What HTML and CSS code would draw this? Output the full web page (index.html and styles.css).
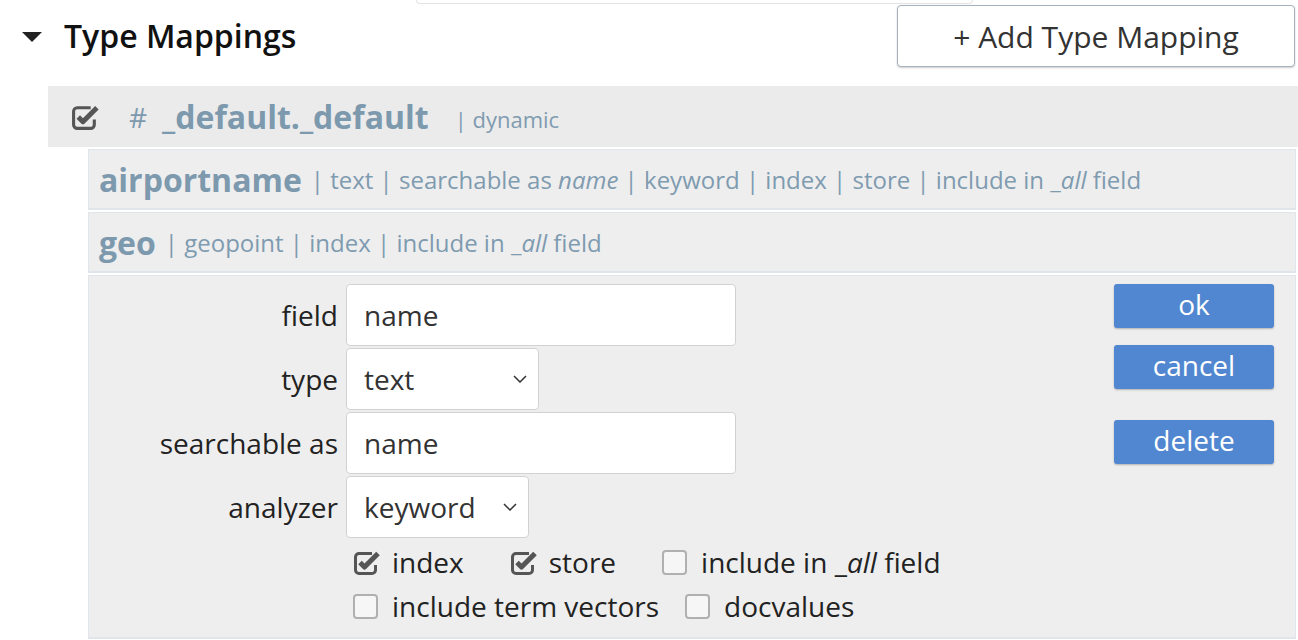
FILE: index.html
```
<!DOCTYPE html>
<html>
<head>
<meta charset="utf-8">
<link rel="stylesheet" href="styles.css">
</head>
<body>
<div class="page">
  <div class="prev-input"></div>
  <div class="section-head">
    <div class="title"><span class="caret"></span><span>Type Mappings</span></div>
    <button class="add-btn">+ Add Type Mapping</button>
  </div>
  <div class="mapping">
    <div class="mapping-head">
      <svg class="chk-icon big" viewBox="0 0 28 26" width="29" height="27"><path d="M19 4.5H6A3.5 3.5 0 0 0 2.5 8v13A3.5 3.5 0 0 0 6 24.5h13a3.5 3.5 0 0 0 3.5-3.5v-5" fill="none" stroke="#555" stroke-width="3"/><path d="M7 13.5l4.5 4.5L25 4.5" fill="none" stroke="#555" stroke-width="4.8" stroke-linejoin="round"/></svg>
      <span class="hash">#</span>
      <span class="type-name">_default._default</span>
      <span class="meta dyn">| dynamic</span>
    </div>
    <div class="fields">
      <div class="field-row">
        <span class="field-name">airportname</span>
        <span class="meta">| text | searchable as <i>name</i> | keyword | index | store | include in _<i>all</i> field</span>
      </div>
      <div class="field-row">
        <span class="field-name">geo</span>
        <span class="meta">| geopoint | index | include in _<i>all</i> field</span>
      </div>
      <div class="edit">
        <div class="form">
          <label class="lbl">field</label>
          <div class="input wide">name</div>
          <label class="lbl">type</label>
          <div class="input select type-sel"><span>text</span><svg width="14" height="8" viewBox="0 0 14 8"><path d="M1 1l6 6 6-6" fill="none" stroke="#333" stroke-width="1.5"/></svg></div>
          <label class="lbl">searchable as</label>
          <div class="input wide">name</div>
          <label class="lbl">analyzer</label>
          <div class="input select an-sel"><span>keyword</span><svg width="14" height="8" viewBox="0 0 14 8"><path d="M1 1l6 6 6-6" fill="none" stroke="#333" stroke-width="1.5"/></svg></div>
          <div class="checks">
            <div class="check-row">
              <span class="chk gap1"><svg class="chk-icon" viewBox="0 0 28 26" width="28" height="26"><path d="M19 4.5H6A3.5 3.5 0 0 0 2.5 8v13A3.5 3.5 0 0 0 6 24.5h13a3.5 3.5 0 0 0 3.5-3.5v-5" fill="none" stroke="#555" stroke-width="3"/><path d="M7 13.5l4.5 4.5L25 4.5" fill="none" stroke="#555" stroke-width="5" stroke-linejoin="round"/></svg><span>index</span></span>
              <span class="chk gap1b"><svg class="chk-icon" viewBox="0 0 28 26" width="28" height="26"><path d="M19 4.5H6A3.5 3.5 0 0 0 2.5 8v13A3.5 3.5 0 0 0 6 24.5h13a3.5 3.5 0 0 0 3.5-3.5v-5" fill="none" stroke="#555" stroke-width="3"/><path d="M7 13.5l4.5 4.5L25 4.5" fill="none" stroke="#555" stroke-width="5" stroke-linejoin="round"/></svg><span>store</span></span>
              <span class="chk"><span class="box"></span><span>include in _<i>all</i> field</span></span>
            </div>
            <div class="check-row">
              <span class="chk gap2"><span class="box"></span><span>include term vectors</span></span>
              <span class="chk"><span class="box"></span><span>docvalues</span></span>
            </div>
          </div>
        </div>
        <div class="actions">
          <button class="btn">ok</button>
          <button class="btn">cancel</button>
          <button class="btn del">delete</button>
        </div>
      </div>
    </div>
  </div>
</div>
</body>
</html>
```
FILE: styles.css
```
* { box-sizing: border-box; }
body {
  margin: 0;
  font-family: "Open Sans", sans-serif;
  background: #fff;
  color: #333;
}
.page { width: 1298px; }
.prev-input {
  margin-left: 416px;
  width: 557px;
  height: 4px;
  border: 1px solid #e3e3e3;
  border-top: none;
  border-radius: 0 0 5px 5px;
}
.section-head {
  display: flex;
  justify-content: space-between;
  align-items: flex-start;
  padding-left: 22px;
  padding-right: 3px;
}
.title {
  display: flex;
  align-items: center;
  height: 63px;
  font-size: 32px;
  font-weight: 600;
  color: #111;
}
.caret {
  width: 0;
  height: 0;
  border-left: 10.5px solid transparent;
  border-right: 10.5px solid transparent;
  border-top: 10px solid #222;
  margin-right: 22px;
  margin-top: 2px;
}
.add-btn {
  margin-top: 1px;
  width: 398px;
  height: 62px;
  background: #fff;
  border: 1px solid #a7b1bd;
  border-radius: 4px;
  box-shadow: 0 1px 2px rgba(0,0,0,0.2);
  font-family: "Open Sans", sans-serif;
  font-size: 30px;
  color: #333;
  padding: 0;
}
.mapping { margin-top: 19px; margin-left: 48px; }
.mapping-head {
  height: 61px;
  background: #ebebeb;
  display: flex;
  align-items: center;
  padding-left: 23px;
  color: #7d99ae;
}
.chk-icon { display: block; flex: none; }
.hash { font-size: 28px; margin-left: 29px; margin-right: 15px; }
.type-name { font-size: 32px; font-weight: 700; margin-right: 26px; }
.meta { font-size: 24px; color: #7f9bb0; }
.meta.dyn { font-size: 22px; margin-top: 4px; }
.fields { margin-left: 40px; margin-right: 2px; }
.field-row {
  margin-top: 2px;
  height: 61px;
  background: #eeeeee;
  border: 1px solid #dfe5eb;
  border-bottom-width: 2px;
  display: flex;
  align-items: center;
  padding-left: 10px;
  color: #7d99ae;
}
.field-name { font-size: 32px; font-weight: 700; margin-right: 9px; }
.edit {
  margin-top: 2px;
  background: #eeeeee;
  border: 1px solid #dfe5eb;
  border-bottom-width: 2px;
  display: flex;
  padding: 8px 21px 9px 0;
}
.form {
  flex: 1;
  display: grid;
  grid-template-columns: 249px auto;
  column-gap: 8px;
  row-gap: 2px;
  align-items: center;
  justify-items: start;
}
.lbl {
  justify-self: end;
  font-size: 28px;
  color: #222;
}
.input {
  height: 62px;
  background: #fff;
  border: 1px solid #d2d2d2;
  border-radius: 4px;
  padding: 0 17px;
  font-size: 28px;
  color: #333;
  display: flex;
  align-items: center;
}
.wide { width: 390px; }
.select { justify-content: space-between; padding-right: 11px; }
.type-sel { width: 193px; }
.an-sel { width: 183px; }
.checks {
  grid-column: 2;
  padding-top: 0;
  padding-left: 7px;
}
.check-row {
  display: flex;
  align-items: center;
  height: 44px;
  font-size: 28px;
  color: #222;
}
.chk { display: flex; align-items: center; }
.chk .chk-icon { margin-right: 11px; }
.gap1 { margin-right: 46px; }
.gap1b { margin-right: 46px; }
.gap2 { margin-right: 26px; }
.box {
  width: 25px;
  height: 25px;
  border: 2px solid #b0b0b0;
  border-radius: 4px;
  background: #f6f6f6;
  margin-right: 14px;
}
.actions {
  display: flex;
  flex-direction: column;
  width: 160px;
}
.btn {
  height: 44px;
  width: 160px;
  background: #5187d0;
  color: #fff;
  border: none;
  border-radius: 3px;
  box-shadow: 0 1px 2px rgba(0,0,0,0.25);
  font-family: "Open Sans", sans-serif;
  font-size: 28px;
  padding: 0 0 4px;
  margin-bottom: 17px;
}
.btn.del { margin-top: 14px; }
```
